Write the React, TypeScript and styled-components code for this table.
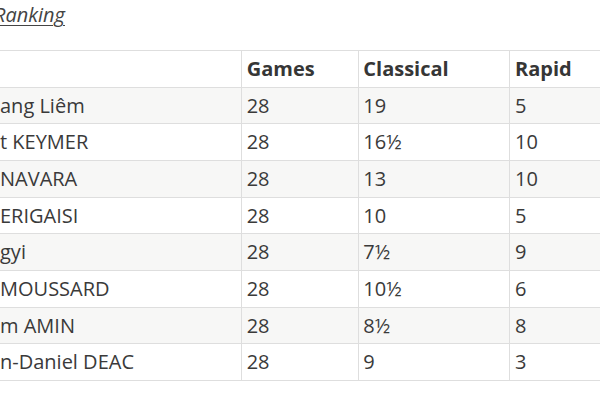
import React from "react";
import styled, { createGlobalStyle } from "styled-components";

const GlobalStyle = createGlobalStyle`
  html, body {
    margin: 0;
    padding: 0;
    background: #ffffff;
    overflow: hidden;
  }
  body {
    font-family: "Open Sans", "Noto Sans", sans-serif;
    color: #3a3a3a;
  }
`;

const Page = styled.div`
  width: 600px;
  height: 400px;
  overflow: hidden;
`;

const Heading = styled.a`
  display: block;
  height: 30px;
  margin: 0 0 20px -6px;
  font-size: 20px;
  line-height: 30px;
  font-style: italic;
  color: #444444;
  text-decoration: underline;
  text-decoration-thickness: 1px;
  text-underline-offset: 3px;
  white-space: nowrap;
`;

const Table = styled.table`
  border-collapse: collapse;
  table-layout: fixed;
  width: 680px;
  font-size: 20px;
`;

const HeadCell = styled.th<{ $first?: boolean }>`
  text-align: left;
  font-weight: 700;
  color: #363636;
  line-height: 35.67px;
  padding: 0 0 0 ${(p) => (p.$first ? "0" : "4.5px")};
  border: 1px solid #dedede;
  border-left-width: ${(p) => (p.$first ? "0" : "1px")};
  white-space: nowrap;
  overflow: hidden;
`;

const Row = styled.tr<{ $shaded: boolean }>`
  background: ${(p) => (p.$shaded ? "#f7f7f6" : "#ffffff")};
`;

const Cell = styled.td<{ $first?: boolean }>`
  line-height: 35.67px;
  padding: 0 0 0 ${(p) => (p.$first ? "0" : "4.5px")};
  border: 1px solid #dedede;
  border-left-width: ${(p) => (p.$first ? "0" : "1px")};
  white-space: nowrap;
  overflow: hidden;
  color: #3a3a3a;
`;

const rows = [
  { name: "ang Liêm", games: "28", classical: "19", rapid: "5" },
  { name: "t KEYMER", games: "28", classical: "16½", rapid: "10" },
  { name: "NAVARA", games: "28", classical: "13", rapid: "10" },
  { name: "ERIGAISI", games: "28", classical: "10", rapid: "5" },
  { name: "gyi", games: "28", classical: "7½", rapid: "9" },
  { name: "MOUSSARD", games: "28", classical: "10½", rapid: "6" },
  { name: "m AMIN", games: "28", classical: "8½", rapid: "8" },
  { name: "n-Daniel DEAC", games: "28", classical: "9", rapid: "3" },
];

export default function App() {
  return (
    <Page>
      <GlobalStyle />
      <Heading href="#">Ranking</Heading>
      <Table>
        <colgroup>
          <col style={{ width: 241.7 }} />
          <col style={{ width: 116.6 }} />
          <col style={{ width: 151.7 }} />
          <col />
        </colgroup>
        <thead>
          <tr>
            <HeadCell $first></HeadCell>
            <HeadCell>Games</HeadCell>
            <HeadCell>Classical</HeadCell>
            <HeadCell>Rapid</HeadCell>
          </tr>
        </thead>
        <tbody>
          {rows.map((r, i) => (
            <Row key={i} $shaded={i % 2 === 0}>
              <Cell $first>{r.name}</Cell>
              <Cell>{r.games}</Cell>
              <Cell>{r.classical}</Cell>
              <Cell>{r.rapid}</Cell>
            </Row>
          ))}
        </tbody>
      </Table>
    </Page>
  );
}
